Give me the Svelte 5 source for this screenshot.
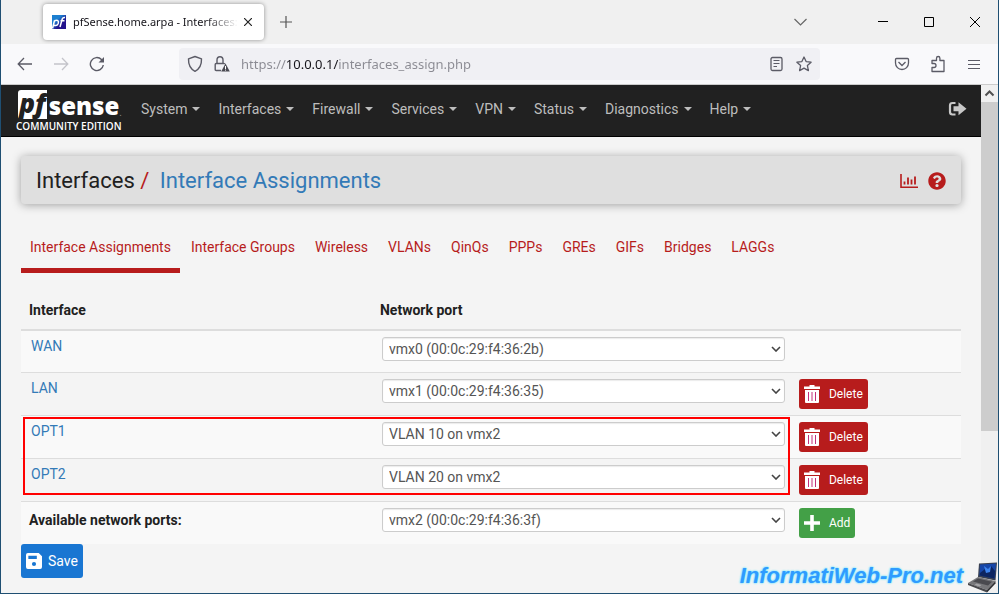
<script>
  const menus = ['System', 'Interfaces', 'Firewall', 'Services', 'VPN', 'Status', 'Diagnostics', 'Help'];
  const tabs = [
    'Interface Assignments', 'Interface Groups', 'Wireless', 'VLANs', 'QinQs',
    'PPPs', 'GREs', 'GIFs', 'Bridges', 'LAGGs'
  ];
  const ports = [
    'vmx0 (00:0c:29:f4:36:2b)',
    'vmx1 (00:0c:29:f4:36:35)',
    'vmx2 (00:0c:29:f4:36:3f)',
    'VLAN 10 on vmx2',
    'VLAN 20 on vmx2'
  ];
  let rows = $state([
    { name: 'WAN', port: ports[0], removable: false },
    { name: 'LAN', port: ports[1], removable: true },
    { name: 'OPT1', port: ports[3], removable: true },
    { name: 'OPT2', port: ports[4], removable: true }
  ]);
  let available = $state(ports[2]);
</script>

{#snippet chevron()}
  <svg class="chevron" width="10" height="6" viewBox="0 0 10 6" aria-hidden="true">
    <path d="M1 1l4 4 4-4" fill="none" stroke="#444" stroke-width="1.6" />
  </svg>
{/snippet}

<div class="window">
  <div class="tabstrip">
    <div class="browser-tab">
      <svg width="16" height="16" viewBox="0 0 16 16" aria-hidden="true">
        <defs>
          <linearGradient id="fav" x1="0" y1="0" x2="1" y2="1">
            <stop offset="0.35" stop-color="#1c7fd0" />
            <stop offset="0.65" stop-color="#23128c" />
          </linearGradient>
        </defs>
        <path d="M1 1h14v14H1z" fill="url(#fav)" />
        <path d="M1.500 14.500l2-8M3.500 6.800c3.500-1.600 4.600.4 3.600 3-.8 1.800-2.400 2-4 1.400M9 13l2.300-8.200q.6-1.600 2.700-1.400M9.500 6.800h4" fill="none" stroke="#fff" stroke-width="1.500" />
      </svg>
      <span class="tab-title">pfSense.home.arpa - Interfaces:</span>
      <button class="tab-close" aria-label="Close tab">
        <svg width="8" height="8" viewBox="0 0 8 8"><path d="M0 0l8 8M8 0L0 8" stroke="#222" stroke-width="1.2" /></svg>
      </button>
    </div>
    <button class="tool" aria-label="New tab">
      <svg width="12" height="12" viewBox="0 0 12 12"><path d="M6 0v12M0 6h12" stroke="#555" stroke-width="1.2" /></svg>
    </button>
    <div class="spring"></div>
    <button class="tool list-tabs" aria-label="List all tabs">
      <svg width="13" height="8" viewBox="0 0 13 8"><path d="M.5 1l6 6 6-6" fill="none" stroke="#666" stroke-width="1.2" /></svg>
    </button>
    <button class="caption" aria-label="Minimize">
      <svg width="10" height="10" viewBox="0 0 10 10"><path d="M0 4.500h10" stroke="#000" /></svg>
    </button>
    <button class="caption" aria-label="Maximize">
      <svg width="10" height="10" viewBox="0 0 10 10"><path d="M.5.5h9v9h-9z" fill="none" stroke="#000" /></svg>
    </button>
    <button class="caption" aria-label="Close window">
      <svg width="10" height="10" viewBox="0 0 10 10"><path d="M0 0l10 10M10 0L0 10" stroke="#000" /></svg>
    </button>
  </div>

  <div class="toolbar">
    <button class="tool" aria-label="Back">
      <svg width="16" height="16" viewBox="0 0 16 16"><path d="M15 8H1.500M7 2L1.200 8 7 14" fill="none" stroke="#5b5b66" stroke-width="1.3" /></svg>
    </button>
    <button class="tool" aria-label="Forward" disabled>
      <svg width="16" height="16" viewBox="0 0 16 16"><path d="M1 8h13.500M9 2l5.800 6L9 14" fill="none" stroke="#c4c4ca" stroke-width="1.3" /></svg>
    </button>
    <button class="tool" aria-label="Reload">
      <svg width="16" height="16" viewBox="0 0 16 16"><path d="M14.300 9A6.500 6.500 0 1 1 12.500 3.500L14 5" fill="none" stroke="#5b5b66" stroke-width="1.4" /><path d="M15 1v5.500H9.500z" fill="#5b5b66" /></svg>
    </button>
    <div class="gap"></div>
    <div class="urlbar">
      <svg width="16" height="18" viewBox="0 0 16 18" aria-hidden="true"><path d="M8 1.500l6.500 2.300c.2 6-1.500 10-6.500 12.500C3 13.800 1.300 9.800 1.500 3.800z" fill="none" stroke="#5b5b66" stroke-width="1.4" stroke-linejoin="round" /></svg>
      <svg width="16" height="18" viewBox="0 0 16 18" aria-hidden="true">
        <path d="M7 15.500H2.200q-1 0-1-1v-5q0-1 1-1h7.600q1 0 1 .8M3 8.500V5a3 3.300 0 0 1 6 0v3.500" fill="none" stroke="#5b5b66" stroke-width="1.400" />
        <path d="M11.500 8.500l4.300 8H7.200z" fill="#4a4a52" />
        <path d="M11.500 11v3M11.500 14.600v1" stroke="#fff" stroke-width="1" />
      </svg>
      <input aria-label="Address" value="https://10.0.0.1/interfaces_assign.php" />
      <svg width="16" height="16" viewBox="0 0 16 16" aria-hidden="true"><rect x="2" y="1.500" width="11" height="13" rx="1.500" fill="none" stroke="#5b5b66" stroke-width="1.300" /><path d="M4.500 4.500h6M4.500 7.500h6M4.500 10.500h3.500" stroke="#5b5b66" /></svg>
      <svg width="16" height="16" viewBox="0 0 16 16" aria-hidden="true"><path d="M8 1l2.100 4.600 5 .6-3.700 3.400 1 5L8 12.100l-4.400 2.500 1-5L.9 6.200l5-.6z" fill="none" stroke="#5b5b66" stroke-width="1.300" stroke-linejoin="round" /></svg>
    </div>
    <div class="gap"></div>
    <button class="tool" aria-label="Save to Pocket">
      <svg width="16" height="16" viewBox="0 0 16 16"><path d="M2.500 2.500h11q1 0 1 1V7a6.500 6.500 0 0 1-13 0V3.500q0-1 1-1z" fill="none" stroke="#5b5b66" stroke-width="1.300" /><path d="M4.500 6l3.500 3.500L11.500 6" fill="none" stroke="#5b5b66" stroke-width="1.300" /></svg>
    </button>
    <button class="tool" aria-label="Extensions">
      <svg width="16" height="18" viewBox="0 0 16 18"><path d="M2 8.500V5.500h4.500V3.200a1.700 1.700 0 0 1 3.400 0v2.300H14v11H2v-4h2a2 2 0 0 0 0-4z" fill="none" stroke="#5b5b66" stroke-width="1.300" stroke-linejoin="round" /></svg>
    </button>
    <button class="tool" aria-label="Open menu">
      <svg width="12" height="11" viewBox="0 0 12 11"><path d="M0 1.500h12M0 5.500h12M0 9.500h12" stroke="#5b5b66" /></svg>
    </button>
  </div>

  <div class="viewport">
    <div class="page">
      <nav class="navbar">
        <a class="brand" href="#home">
          <span class="wordmark"><span class="pf">pf</span><span class="sense">sense</span><span class="dot">.</span></span>
          <span class="edition">COMMUNITY EDITION</span>
        </a>
        <div class="menus">
          {#each menus as menu}
            <button class="menu">{menu}<span class="caret"></span></button>
          {/each}
        </div>
        <a class="logout" href="#logout" aria-label="Log out">
          <svg width="19" height="16" viewBox="0 0 19 16"><path d="M7.500 2H4.500Q2 2 2 4.500v6.500q0 2.500 2.500 2.500h3" fill="none" stroke="#c8c8c8" stroke-width="2.200" /><path d="M5.500 5.200h5V1.300l8 6.500-8 6.500v-4h-5z" fill="#c8c8c8" /></svg>
        </a>
      </nav>

      <main>
        <header class="panel">
          <h1>Interfaces <span class="slash">/</span> <a href="#assign">Interface Assignments</a></h1>
          <div class="panel-icons">
            <a href="#status" aria-label="Monitoring">
              <svg width="18" height="16" viewBox="0 0 18 16"><path d="M1 1v13.200h17" fill="none" stroke="#b71c1c" stroke-width="1.600" /><path d="M4.500 11.500V8.500M8 11.500V4.500M11.500 11.500V6.500M15 11.500V3.500" fill="none" stroke="#b71c1c" stroke-width="1.800" /></svg>
            </a>
            <a href="#help" aria-label="Help">
              <svg width="18" height="18" viewBox="0 0 512 512"><path fill="#b71c1c" d="M504 256c0 136.997-111.043 248-248 248S8 392.997 8 256C8 119.083 119.043 8 256 8s248 111.083 248 248zM262.655 90c-54.497 0-89.255 22.957-116.549 63.758-3.536 5.286-2.353 12.415 2.715 16.258l34.699 26.310c5.205 3.947 12.621 3.008 16.665-2.122 17.864-22.658 30.113-35.797 57.303-35.797 20.429 0 45.698 13.148 45.698 32.958 0 14.976-12.363 22.667-32.534 33.976C247.128 238.528 216 254.941 216 296v4c0 6.627 5.373 12 12 12h56c6.627 0 12-5.373 12-12v-1.333c0-28.462 83.186-29.647 83.186-106.667 0-58.002-60.165-102-116.531-102zM256 338c-25.365 0-46 20.635-46 46 0 25.364 20.635 46 46 46s46-20.636 46-46c0-25.365-20.635-46-46-46z" /></svg>
            </a>
          </div>
        </header>

        <nav class="tabs">
          {#each tabs as tab, i}
            <a href="#tab-{i}" class:active={i === 0}>{tab}</a>
          {/each}
        </nav>

        <div class="table-area">
          <table>
            <colgroup><col class="c-name" /><col class="c-port" /><col /></colgroup>
            <thead>
              <tr><th>Interface</th><th>Network port</th><th></th></tr>
            </thead>
            <tbody>
              {#each rows as row}
                <tr>
                  <td class="name"><a href="#{row.name}">{row.name}</a></td>
                  <td>
                    <div class="select">
                      <select aria-label="Network port for {row.name}" bind:value={row.port}>
                        {#each ports as port}<option>{port}</option>{/each}
                      </select>
                      {@render chevron()}
                    </div>
                  </td>
                  <td>
                    {#if row.removable}
                      <button class="btn danger">
                        <svg width="16" height="20" viewBox="0 0 16 20" aria-hidden="true"><path d="M5.500 1h5v1.500H16V5H0V2.500h5.500z" fill="#fff" /><path d="M1 6h14v12q0 1-1 1H2q-1 0-1-1z" fill="#fff" /><path d="M4.500 8v9M8 8v9M11.500 8v9" stroke="#c2307a" stroke-width="1" /></svg>
                        Delete
                      </button>
                    {/if}
                  </td>
                </tr>
              {/each}
              <tr>
                <th><label for="available">Available network ports:</label></th>
                <td>
                  <div class="select">
                    <select id="available" bind:value={available}>
                      {#each ports as port}<option>{port}</option>{/each}
                    </select>
                    {@render chevron()}
                  </div>
                </td>
                <td>
                  <button class="btn success">
                    <svg width="16" height="16" viewBox="0 0 16 16" aria-hidden="true"><path d="M8 0v16M0 8h16" stroke="#fff" stroke-width="3.600" /></svg>
                    Add
                  </button>
                </td>
              </tr>
            </tbody>
          </table>
          <div class="highlight"></div>
        </div>

        <button class="save">
          <svg width="16" height="16" viewBox="0 0 17 17" aria-hidden="true"><path fill="#fff" fill-rule="evenodd" d="M2 0h11.500L17 3.500V15q0 2-2 2H2q-2 0-2-2V2q0-2 2-2zM2.500 3v3.500h9V3zM8.500 9.500a2.200 2.200 0 1 0 0 4.400 2.200 2.200 0 0 0 0-4.400z" /></svg>
          Save
        </button>
      </main>
    </div>

    <div class="scrollbar">
      <svg width="17" height="17" viewBox="0 0 17 17" aria-hidden="true"><path d="M4.500 10.500l4-4 4 4" fill="none" stroke="#505050" stroke-width="2" /></svg>
      <div class="thumb"></div>
    </div>
  </div>

  <div class="watermark">
    <span>InformatiWeb-Pro.net</span>
    <svg width="30" height="32" viewBox="0 0 30 32" aria-hidden="true">
      <path d="M11 2.500L29 1.500 27.500 19.500 10 16z" fill="#3a4150" />
      <path d="M12 3.500L28 2.500l-1.300 15L11.500 14.500z" fill="#1746a8" />
      <path d="M12 12l5-4 3 3 3-6 4 5-.5 7.500-15-3z" fill="#0d2560" />
      <path d="M16 5l4 3 3-3-1 6-4 1z" fill="#3d84ee" />
      <path d="M10 16l17.500 4-8.500 9L0 22z" fill="#77777a" />
      <path d="M10 17.500l14 3.300-4 3.700L5 20.500z" fill="#4a4a4f" />
      <path d="M8.500 22.500l5 1.400-2 1.700-5-1.500z" fill="#a5a5a8" />
      <path d="M0 22l19 7v2.500L0 24z" fill="#48484c" />
      <path d="M19 29l8.500-9v2.500l-8.500 9z" fill="#2d2d30" />
    </svg>
  </div>
</div>

<style>
  :global(body) { margin: 0; }
  * { box-sizing: border-box; }
  button { border: 0; padding: 0; background: none; font: inherit; color: inherit; }
  a { text-decoration: none; color: #337ab7; }
  svg { display: block; flex: none; }

  .window {
    position: relative;
    display: flex;
    flex-direction: column;
    min-height: 100vh;
    border: 1px solid #1f4f72;
    border-top: 0;
    background: #f4f4f4;
    font: 14px/20px Roboto, sans-serif;
    color: #212121;
  }

  .tabstrip { display: flex; align-items: center; height: 44px; padding-left: 42px; background: #f0f0f0; }
  .browser-tab {
    display: flex;
    align-items: center;
    gap: 6px;
    width: 221px;
    height: 36px;
    padding: 0 12px 0 8px;
    border-radius: 4px;
    background: #fff;
    box-shadow: 0 0 4px rgba(0, 0, 0, 0.4);
    font: 11px/20px "Noto Sans", sans-serif;
    color: #15141a;
  }
  .tab-title {
    flex: 1;
    white-space: nowrap;
    -webkit-mask-image: linear-gradient(to left, transparent, #000 32px);
    mask-image: linear-gradient(to left, transparent, #000 32px);
  }
  .spring { flex: 1; }
  .tool { display: flex; align-items: center; justify-content: center; width: 36px; height: 32px; }
  .browser-tab + .tool { margin-left: 4px; }
  .list-tabs { margin-right: 42px; }
  .caption { display: flex; align-items: center; justify-content: center; width: 46px; height: 32px; }

  .toolbar { display: flex; align-items: center; height: 41px; padding: 0 6px; background: #f9f9fb; border-bottom: 1px solid #ccc; }
  .gap { flex: 0 1 64px; }
  .urlbar {
    display: flex;
    flex: 1;
    align-items: center;
    gap: 11px;
    height: 32px;
    padding: 0 8px;
    border-radius: 4px;
    background: #f0f0f4;
  }
  .urlbar input {
    flex: 1;
    min-width: 0;
    padding: 0;
    border: 0;
    outline: 0;
    font: 13px/20px "Noto Sans", sans-serif;
    color: transparent;
    background: linear-gradient(to right, #8a8a92 46px, #15141a 46px, #15141a 97px, #8a8a92 97px);
    -webkit-background-clip: text;
    background-clip: text;
  }

  .viewport { display: flex; flex: 1; }
  .page { flex: 1; min-width: 0; }
  .scrollbar { width: 17px; background: #f0f0f0; }
  .thumb { height: 329px; background: #cdcdcd; }

  .navbar { display: flex; align-items: center; height: 52px; padding: 0 14px 0 15px; background: #212121; border-bottom: 1px solid #000; }
  .brand { display: flex; flex-direction: column; gap: 1px; width: 106px; color: #fff; }
  .wordmark { display: flex; align-items: center; height: 30px; padding-left: 2px; }
  .pf {
    width: 29px;
    height: 29px;
    border-radius: 3px 0 0 3px;
    background: #fff;
    color: #212121;
    font: italic 800 26px/27px "Open Sans", sans-serif;
    text-align: center;
  }
  .sense { padding: 3px 0 0 2px; font: 800 24px/24px "Open Sans", sans-serif; }
  .dot { font-size: 10px; line-height: 12px; align-self: flex-end; color: #888; }
  .edition { font: 600 10px/12px "Open Sans", sans-serif; white-space: nowrap; }
  .menus { display: flex; flex: 1; gap: 0; padding: 0 0 4px 10px; }
  .menu { display: flex; align-items: center; gap: 5px; padding: 0 9px; color: #bdbdbd; }
  .caret { border-top: 4px solid; border-left: 4px solid transparent; border-right: 4px solid transparent; }
  .logout { padding-bottom: 4px; }

  main { padding: 19px 20px 15px; }
  .panel {
    display: flex;
    align-items: center;
    justify-content: space-between;
    height: 48px;
    padding: 2px 15px 0;
    border-radius: 4px;
    background: #dfdfdf;
    box-shadow: 0 1px 10px rgba(0, 0, 0, 0.35);
  }
  h1 { margin: 0; font-weight: 400; font-size: 22px; line-height: 24px; }
  .slash { color: #b71c1c; margin-right: 5px; }
  .panel-icons { display: flex; align-items: center; gap: 10px; }

  .tabs { display: flex; gap: 2px; margin-top: 23px; }
  .tabs a { padding: 10px 9px 11px; border-bottom: 5px solid transparent; color: #b71c1c; }
  .tabs .active { border-color: #b71c1c; }

  .table-area { position: relative; margin-top: 19px; }
  table { width: 100%; table-layout: fixed; border-collapse: separate; border-spacing: 0; }
  .c-name { width: 37.34%; }
  .c-port { width: 44.36%; }
  th { padding: 8px; text-align: left; vertical-align: top; font-weight: 700; }
  thead th { padding-bottom: 9px; border-bottom: 2px solid #ddd; }
  td { padding: 6px 4px 6px 10px; vertical-align: top; }
  tbody tr + tr > * { border-top: 1px solid #ddd; }
  tbody tr:nth-child(odd) { background: #f9f9f9; }
  tbody tr { height: 41px; }
  .name { padding-top: 5px; }

  .select { display: grid; align-items: center; }
  .select > * { grid-area: 1 / 1; }
  .chevron { justify-self: end; margin-right: 4px; pointer-events: none; }
  select {
    appearance: none;
    width: 100%;
    height: 24px;
    padding: 0 6px;
    border: 1px solid #ccc;
    border-radius: 3px;
    background: #fff;
    box-shadow: inset 0 1px 1px rgba(0, 0, 0, 0.08);
    font: 14px/20px Roboto, sans-serif;
    color: #555;
  }

  .btn, .save { display: flex; align-items: center; border-radius: 3px; color: #fff; }
  .btn { gap: 9px; height: 30px; padding: 0 5px; font-size: 12px; }
  .danger { background: #b71c1c; }
  .success { background: #43a047; }
  .save { gap: 6px; height: 34px; padding: 0 5px; background: #1976d2; }

  /* Outline round the two VLAN-backed interfaces */
  .highlight {
    position: absolute;
    top: 125px;
    left: 2px;
    width: 81.6%;
    height: 78px;
    border: 2px solid #f00;
    pointer-events: none;
  }

  .watermark {
    position: absolute;
    right: 0;
    bottom: 0;
    display: flex;
    gap: 5px;
    font: italic bold 22px/30px "Liberation Sans", Arial, sans-serif;
    color: #2f9bff;
    text-shadow: 0 0 2px #6fe6ff, 0 0 2px #6fe6ff;
  }
</style>
